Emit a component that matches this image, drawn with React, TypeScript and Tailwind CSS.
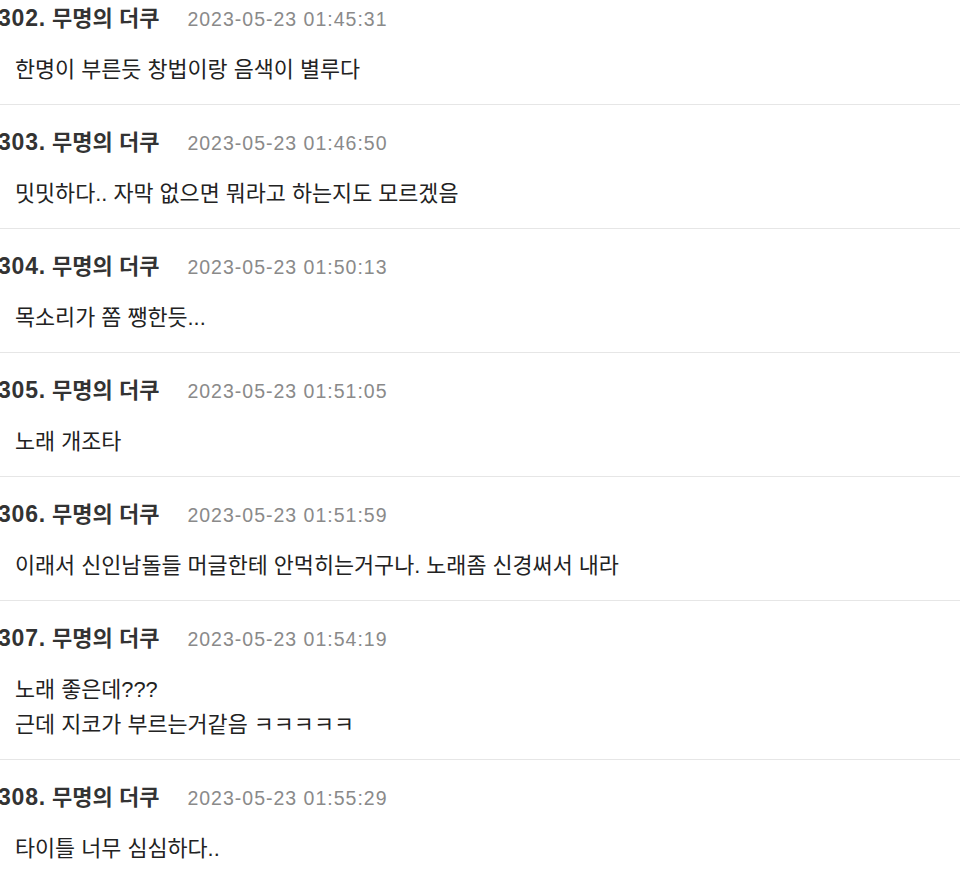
import React from "react";

type Comment = { no: number; date: string; lines: string[] };

const comments: Comment[] = [
  { no: 302, date: "2023-05-23 01:45:31", lines: ["한명이 부른듯 창법이랑 음색이 별루다"] },
  { no: 303, date: "2023-05-23 01:46:50", lines: ["밋밋하다.. 자막 없으면 뭐라고 하는지도 모르겠음"] },
  { no: 304, date: "2023-05-23 01:50:13", lines: ["목소리가 쫌 쨍한듯..."] },
  { no: 305, date: "2023-05-23 01:51:05", lines: ["노래 개조타"] },
  { no: 306, date: "2023-05-23 01:51:59", lines: ["이래서 신인남돌들 머글한테 안먹히는거구나. 노래좀 신경써서 내라"] },
  { no: 307, date: "2023-05-23 01:54:19", lines: ["노래 좋은데???", "근데 지코가 부르는거같음 ㅋㅋㅋㅋㅋ"] },
  { no: 308, date: "2023-05-23 01:55:29", lines: ["타이틀 너무 심심하다.."] },
];

function CommentRow({ c }: { c: Comment }) {
  return (
    <div className="border-b border-[#e6e6e6] pt-[23px] pb-[17px]">
      <div className="flex items-baseline h-[28px] leading-[28px] -ml-[2px] whitespace-nowrap">
        <span className="font-bold text-[#333333]">
          <span className="text-[23px] tracking-[0.8px]">{c.no}.</span>
          <span className="text-[22px]"> 무명의 더쿠</span>
        </span>
        <span className="ml-[28px] text-[19.5px] tracking-[1px] text-[#8a8a8a]">{c.date}</span>
      </div>
      <div className="mt-[20px] pl-[15px] text-[21.8px] leading-[35px] text-[#222222]">
        {c.lines.map((l, i) => (
          <div key={i}>{l}</div>
        ))}
      </div>
    </div>
  );
}

export default function App() {
  return (
    <div
      className="w-[960px] h-[873px] overflow-hidden bg-white"
      style={{ fontFamily: '"Liberation Sans", "Noto Sans CJK KR", sans-serif' }}
    >
      <div className="-mt-[19px]">
        {comments.map((c) => (
          <CommentRow key={c.no} c={c} />
        ))}
      </div>
    </div>
  );
}
